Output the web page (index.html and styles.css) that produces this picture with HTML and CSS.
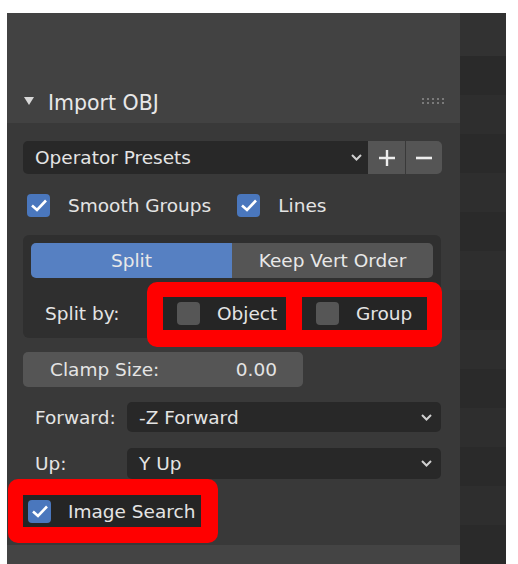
FILE: index.html
```html
<!DOCTYPE html>
<html lang="en">
<head>
  <meta charset="UTF-8">
  <title>Import OBJ</title>
  <link rel="stylesheet" href="styles.css">
</head>
<body>
  <div class="frame">
    <div class="panel">
      <div class="panel-head">
        <div class="head-row">
          <svg class="arrow" width="10" height="8" viewBox="0 0 10 8"><path d="M0 0 H10 L5 8 Z" fill="#d8d8d8"/></svg>
          <span class="head-title">Import OBJ</span>
          <svg class="grip" width="22" height="8" viewBox="0 0 22 8">
            <g fill="#7a7a7a">
              <rect x="0" y="1" width="2" height="2"/><rect x="5" y="1" width="2" height="2"/><rect x="10" y="1" width="2" height="2"/><rect x="15" y="1" width="2" height="2"/><rect x="20" y="1" width="2" height="2"/>
              <rect x="0" y="5" width="2" height="2"/><rect x="5" y="5" width="2" height="2"/><rect x="10" y="5" width="2" height="2"/><rect x="15" y="5" width="2" height="2"/><rect x="20" y="5" width="2" height="2"/>
            </g>
          </svg>
        </div>
      </div>

      <div class="panel-body">
        <div class="presets">
          <div class="field select-field">
            <span>Operator Presets</span>
            <svg class="chev" width="11" height="7" viewBox="0 0 11 7"><path d="M1 1 L5.5 5.5 L10 1" fill="none" stroke="#d0d0d0" stroke-width="2"/></svg>
          </div>
          <div class="btn plus">
            <svg width="18" height="18" viewBox="0 0 18 18"><path d="M9 1 V17 M1 9 H17" stroke="#eee" stroke-width="2.4"/></svg>
          </div>
          <div class="btn minus">
            <svg width="18" height="18" viewBox="0 0 18 18"><path d="M1 9 H17" stroke="#eee" stroke-width="2.6"/></svg>
          </div>
        </div>

        <div class="checks">
          <label class="check"><span class="cb on"><svg width="18" height="15" viewBox="0 0 18 15"><path d="M2 7.5 L7 12 L16 2.5" fill="none" stroke="#fff" stroke-width="2.6"/></svg></span>Smooth Groups</label>
          <label class="check"><span class="cb on"><svg width="18" height="15" viewBox="0 0 18 15"><path d="M2 7.5 L7 12 L16 2.5" fill="none" stroke="#fff" stroke-width="2.6"/></svg></span>Lines</label>
        </div>

        <div class="split-box">
          <div class="toggle">
            <div class="toggle-item active">Split</div>
            <div class="toggle-item">Keep Vert Order</div>
          </div>
          <div class="split-by">
            <span class="split-label">Split by:</span>
            <div class="mark mark-split">
              <div class="opt"><span class="cb"></span>Object</div>
              <div class="opt"><span class="cb"></span>Group</div>
            </div>
          </div>
        </div>

        <div class="num-field">
          <span>Clamp Size:</span>
          <span>0.00</span>
        </div>

        <div class="prop">
          <span class="prop-label">Forward:</span>
          <div class="field select-field prop-select">
            <span>-Z Forward</span>
            <svg class="chev" width="11" height="7" viewBox="0 0 11 7"><path d="M1 1 L5.5 5.5 L10 1" fill="none" stroke="#d0d0d0" stroke-width="2"/></svg>
          </div>
        </div>

        <div class="prop">
          <span class="prop-label">Up:</span>
          <div class="field select-field prop-select">
            <span>Y Up</span>
            <svg class="chev" width="11" height="7" viewBox="0 0 11 7"><path d="M1 1 L5.5 5.5 L10 1" fill="none" stroke="#d0d0d0" stroke-width="2"/></svg>
          </div>
        </div>

        <div class="mark mark-image">
          <div class="opt opt-image"><span class="cb on"><svg width="18" height="15" viewBox="0 0 18 15"><path d="M2 7.5 L7 12 L16 2.5" fill="none" stroke="#fff" stroke-width="2.6"/></svg></span>Image Search</div>
        </div>
      </div>

      <div class="panel-next"></div>
    </div>

    <div class="sidebar">
      <div class="band b0"></div>
      <div class="band b2"></div>
      <div class="band b1"></div>
      <div class="band b2"></div>
      <div class="band b1"></div>
      <div class="band b2"></div>
      <div class="band b1"></div>
      <div class="band b2"></div>
      <div class="band b1"></div>
      <div class="band b2"></div>
      <div class="band b1"></div>
      <div class="band b2"></div>
      <div class="band b1"></div>
      <div class="band b2"></div>
    </div>
  </div>
</body>
</html>
```

FILE: styles.css
```css
* { box-sizing: border-box; }
html, body { height: 100%; }
body {
  margin: 0;
  background: #fff;
  font-family: "DejaVu Sans", "Liberation Sans", sans-serif;
  font-size: 18.5px;
  color: #e4e4e4;
  overflow: hidden;
}

.frame {
  display: flex;
  margin: 13px 12px 0 7px;
  height: 551px;
  background: #2c2c2c;
}

.panel {
  width: 453px;
  background: #393939;
  display: flex;
  flex-direction: column;
}

/* header */
.panel-head {
  height: 110px;
  background: #424242;
  display: flex;
  align-items: flex-end;
}
.head-row {
  flex: 1;
  height: 40px;
  display: flex;
  align-items: center;
  padding: 0 16px 0 17px;
}
.arrow { margin-right: 14px; margin-top: -4px; }
.head-title { font-size: 20.5px; color: #e8e8e8; flex: 1; }
.grip { margin-top: -4px; }

/* body */
.panel-body {
  padding: 18px 18px 0 16px;
  display: flex;
  flex-direction: column;
}

.field {
  background: #282828;
  border-radius: 5px;
}
.select-field {
  display: flex;
  align-items: center;
  justify-content: space-between;
  padding: 0 9px 0 12px;
}

.presets {
  display: flex;
  height: 33px;
}
.presets .select-field {
  flex: 1;
  border-radius: 5px 0 0 5px;
  padding-right: 6px;
}
.btn {
  width: 37px;
  background: #555;
  display: flex;
  align-items: center;
  justify-content: center;
}
.plus { margin-right: 1px; }
.minus { width: 36px; border-radius: 0 5px 5px 0; }

/* checkboxes */
.checks {
  display: flex;
  margin-top: 19px;
  padding-left: 4px;
  height: 24px;
  align-items: center;
}
.check {
  display: flex;
  align-items: center;
  margin-right: 26px;
}
.cb {
  width: 23px;
  height: 23px;
  border-radius: 4px;
  background: #565656;
  margin-right: 18px;
  display: flex;
  align-items: center;
  justify-content: center;
  flex: none;
}
.cb.on { background: #4a77bd; }

/* split box */
.split-box {
  margin-top: 18px;
  width: 418px;
  background: #2f2f2f;
  border-radius: 6px;
  padding: 8px;
}
.toggle {
  display: flex;
  height: 35px;
}
.toggle-item {
  flex: 1;
  display: flex;
  align-items: center;
  justify-content: center;
  background: #555;
  color: #e8e8e8;
}
.toggle-item.active {
  background: #5680c2;
  border-radius: 5px 0 0 5px;
}
.toggle-item:last-child { border-radius: 0 5px 5px 0; }

.split-by {
  display: flex;
  align-items: center;
  margin-top: 19px;
  padding-left: 14px;
}
.split-label { width: 118px; flex: none; }

/* red annotation frames */
.mark {
  background: #f00;
  border-radius: 10px;
  display: flex;
}
.mark-split {
  gap: 16px;
  padding: 15px 15px 17px 16px;
  margin: -15px -15px -17px -16px;
}
.opt {
  height: 33px;
  background: #252525;
  display: flex;
  align-items: center;
  padding-left: 14px;
  width: 123px;
}
.opt .cb { margin-right: 17px; }
.opt + .opt { width: 125px; }

.num-field {
  margin-top: 14px;
  width: 280px;
  height: 35px;
  background: #555;
  border-radius: 5px;
  display: flex;
  align-items: center;
  justify-content: space-between;
  padding: 0 26px 0 27px;
}

.prop {
  display: flex;
  align-items: center;
  margin-top: 15px;
  height: 30px;
}
.prop + .prop { margin-top: 16px; height: 31px; }
.prop-label {
  width: 104px;
  padding-left: 12px;
  flex: none;
}
.prop-select {
  flex: 1;
  height: 100%;
  margin-right: 1px;
}

.mark-image {
  align-self: flex-start;
  margin: 0 0 0 -15px;
  padding: 16px 17px 16px 15px;
}
.opt-image {
  width: 178px;
  height: 32px;
  padding-left: 5px;
}

.panel-next {
  margin-top: auto;
  height: 19px;
  background: #444;
}

/* right strip */
.sidebar {
  flex: 1;
  display: flex;
  flex-direction: column;
}
.band { height: 40px; }
.b0 { height: 44px; background: #323232; }
.b1 { background: #2e2e2e; }
.b2 { background: #2a2a2a; }
```
